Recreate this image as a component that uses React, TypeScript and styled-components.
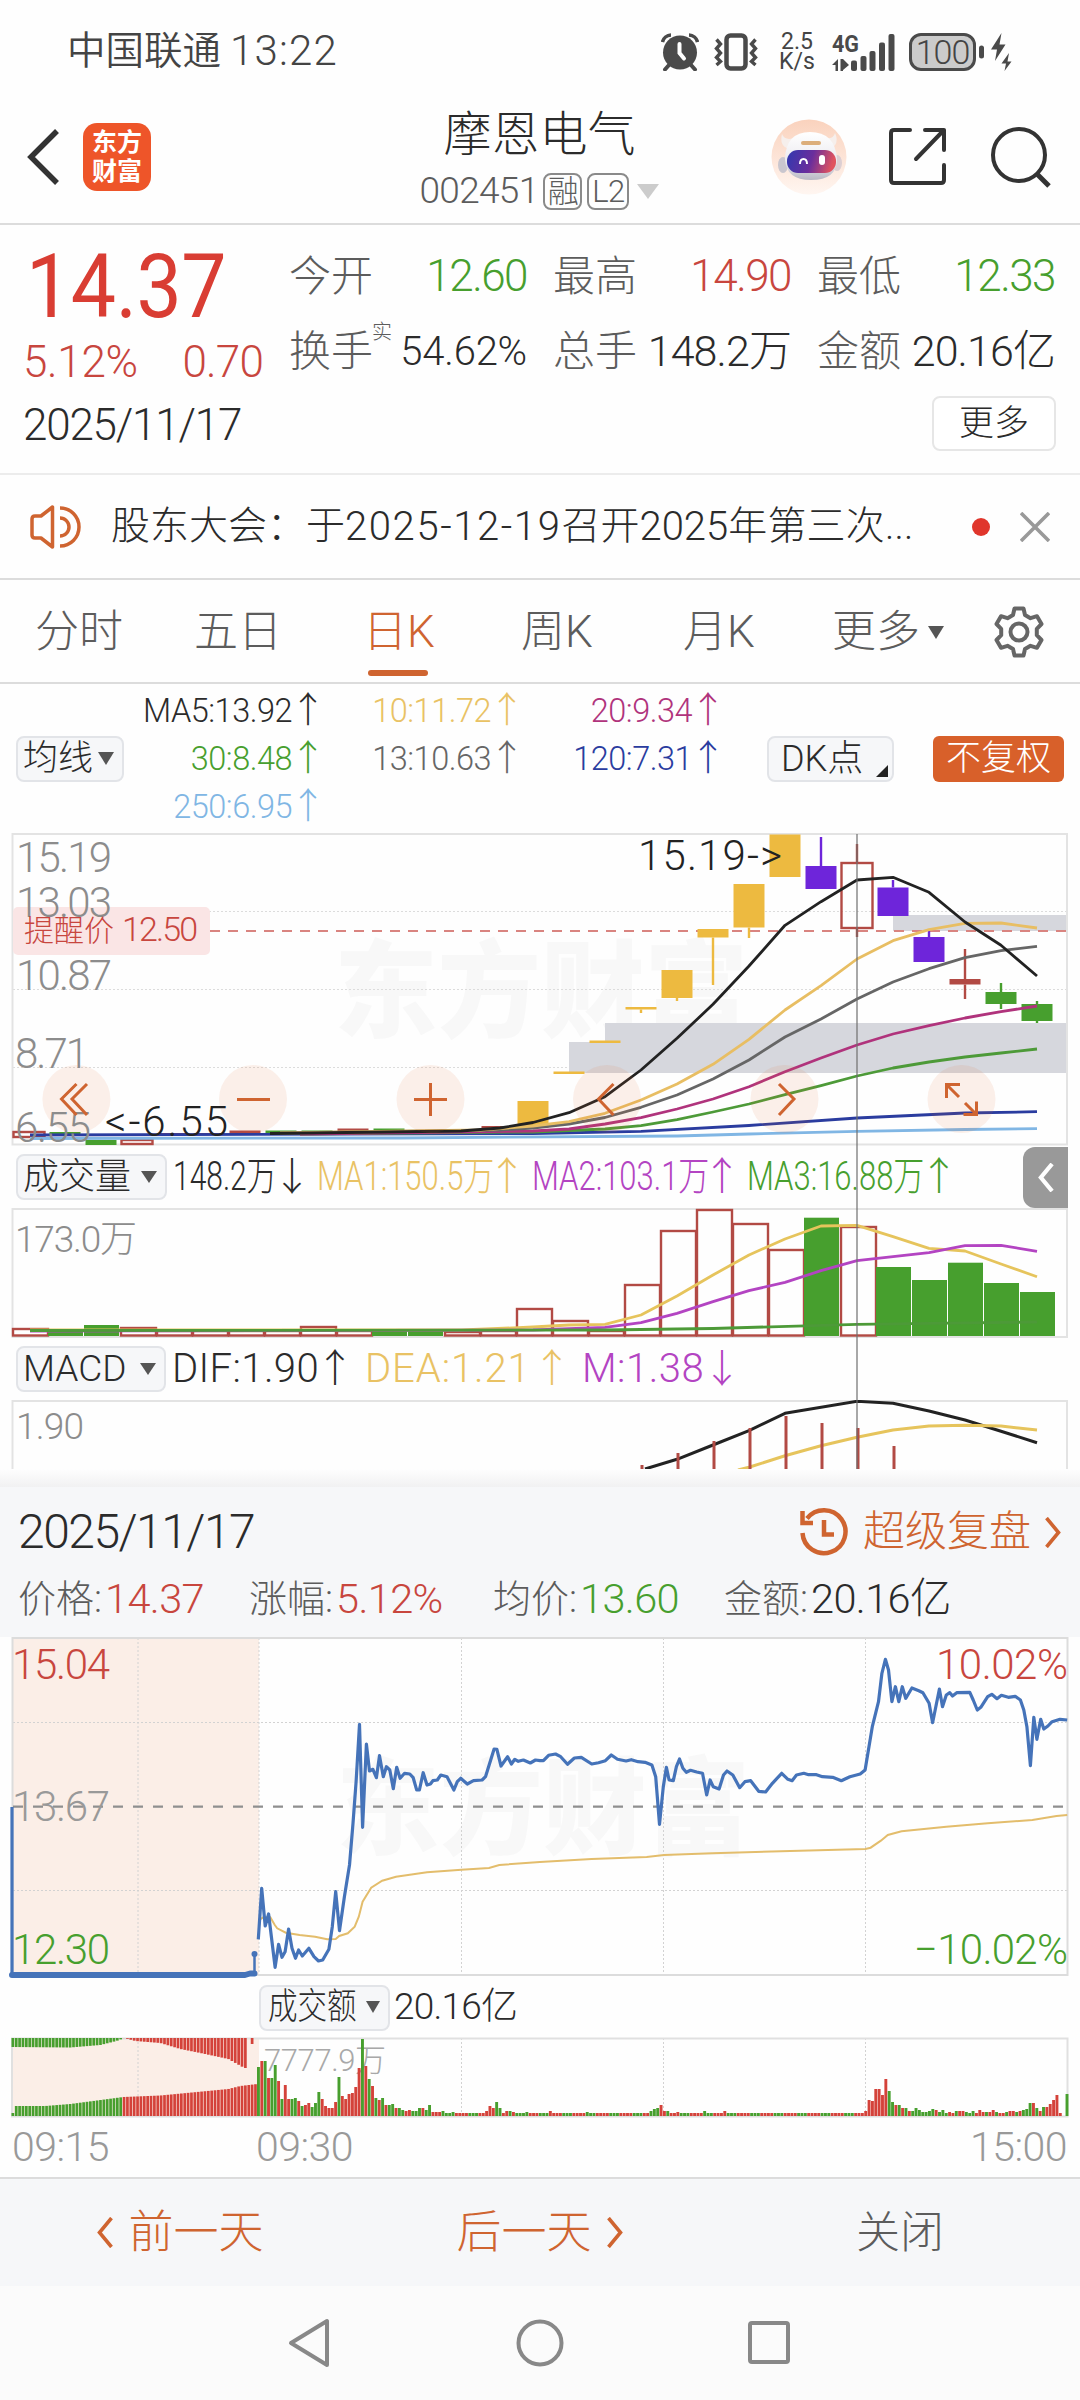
import React from "react";
import styled, { createGlobalStyle } from "styled-components";

const C = {
  ink: "#2b2b2b",
  mid: "#5c5c5c",
  soft: "#8c8c8c",
  red: "#c8463e",
  strongRed: "#d93d33",
  green: "#479f2e",
  orange: "#cf6430",
  gold: "#e9c264",
  magenta: "#b0337c",
  navy: "#2a3c9f",
  sky: "#80b6e4",
  violet: "#b344c2",
  line: "#dcdcdc",
  panel: "#f6f7f9",
};

const Global = createGlobalStyle`
  * { box-sizing: border-box; }
  body { margin: 0; background: #fdfdfd; }
`;

const Screen = styled.main`
  width: 1080px;
  height: 2400px;
  overflow: hidden;
  display: flex;
  flex-direction: column;
  background: #fefefe;
  color: ${C.ink};
  font-family: Roboto, "Noto Sans CJK SC", sans-serif;
  font-weight: 300;
  line-height: 1;
  white-space: nowrap;
  > * { flex-shrink: 0; }
`;

const Txt = styled.span<{ $size: number; $color?: string; $ls?: number; $weight?: number }>`
  font-size: ${(p) => p.$size}px;
  color: ${(p) => p.$color ?? "inherit"};
  letter-spacing: ${(p) => p.$ls ?? 0}px;
  font-weight: ${(p) => p.$weight ?? 300};
  line-height: 1.2;
`;

/* ---------- status bar ---------- */

const StatusBar = styled.header`
  height: 100px;
  padding: 3px 66px 0 67px;
  display: flex;
  align-items: center;
  justify-content: space-between;
  color: #444;
`;
const Carrier = styled.div`
  display: flex;
  align-items: center;
  gap: 9px;
`;
const StatusIcons = styled.div`
  display: flex;
  align-items: center;
`;
const Speed = styled.div`
  width: 40px;
  margin: 0 15px 0 19px;
  display: flex;
  flex-direction: column;
  align-items: center;
  font-size: 23px;
  font-weight: 400;
  line-height: 20px;
`;
const Battery = styled.div`
  width: 67px;
  height: 38px;
  margin-left: 14px;
  border: 3px solid #4a4a4a;
  border-radius: 12px;
  background: #cbcbcb;
  display: flex;
  align-items: center;
  justify-content: center;
  font-size: 34px;
  letter-spacing: -1px;
`;

/* ---------- title bar ---------- */

const TitleBar = styled.header`
  height: 125px;
  padding: 0 28px 0 24px;
  display: grid;
  grid-template-columns: 330px 1fr 330px;
  border-bottom: 2px solid ${C.line};
`;
const TitleLeft = styled.div`
  display: flex;
  align-items: center;
  gap: 22px;
  padding-bottom: 9px;
`;
const AppLogo = styled.div`
  width: 68px;
  height: 68px;
  border-radius: 14px;
  background: #ee5529;
  color: #fff;
  display: flex;
  flex-direction: column;
  align-items: center;
  justify-content: center;
  font-size: 25px;
  font-weight: 700;
  line-height: 29px;
`;
const TitleMid = styled.div`
  display: flex;
  flex-direction: column;
  align-items: center;
  padding-left: 3px;
`;
const StockName = styled.h1`
  margin: 6px 0 0 0;
  font-size: 48px;
  font-weight: 300;
  line-height: 58px;
`;
const CodeRow = styled.div`
  display: flex;
  align-items: center;
  gap: 5px;
  margin-top: 7px;
  height: 40px;
`;
const Tag = styled.span<{ $w: number }>`
  width: ${(p) => p.$w}px;
  height: 37px;
  border: 2px solid #8a8a8a;
  border-radius: 8px;
  display: flex;
  align-items: center;
  justify-content: center;
  font-size: 31px;
  letter-spacing: -0.5px;
  color: ${C.mid};
`;
const TitleRight = styled.div`
  display: flex;
  align-items: center;
  justify-content: flex-end;
  padding-bottom: 9px;
`;
const Caret = styled.i<{ $w: number; $h: number; $c: string }>`
  flex: none;
  border-left: ${(p) => p.$w / 2}px solid transparent;
  border-right: ${(p) => p.$w / 2}px solid transparent;
  border-top: ${(p) => p.$h}px solid ${(p) => p.$c};
`;
const CodeCaret = styled(Caret)`
  margin-left: 3px;
`;

/* ---------- quote ---------- */

const Quote = styled.section`
  height: 250px;
  display: flex;
  border-bottom: 2px solid #ececec;
`;
const PriceCol = styled.div`
  width: 289px;
  padding: 23px 0 0 23px;
`;
const PriceLine = styled.div<{ $h: number }>`
  height: ${(p) => p.$h}px;
  width: 240px;
  display: flex;
  align-items: center;
  justify-content: space-between;
`;
const BigPrice = styled.span`
  margin-left: 3px;
  font-size: 89px;
  font-weight: 400;
  letter-spacing: -0.5px;
  color: ${C.strongRed};
  transform: scaleX(0.905);
  transform-origin: left center;
`;
const StatCol = styled.div`
  flex: 1;
  display: flex;
  flex-direction: column;
  padding: 14px 24px 0 0;
`;
const StatGrid = styled.div`
  display: grid;
  grid-template-columns: repeat(3, 238px);
  column-gap: 26px;
  grid-auto-rows: 75px;
`;
const Stat = styled.div`
  display: flex;
  align-items: center;
  justify-content: space-between;
`;
const Sup = styled.sup`
  font-size: 20px;
  line-height: 1;
  color: ${C.mid};
  align-self: flex-start;
  margin: 8px 0 0 -1px;
`;
const StatLabel = styled.div`
  display: flex;
  align-self: stretch;
  align-items: center;
  font-size: 42px;
  color: ${C.mid};
`;
const MoreButton = styled.button`
  align-self: flex-end;
  margin-top: 7px;
  width: 124px;
  height: 55px;
  border: 2px solid #e6e6e6;
  border-radius: 8px;
  background: #fff;
  font: inherit;
  font-size: 35px;
  color: ${C.ink};
  padding: 0 0 1px;
`;

/* ---------- notice ---------- */

const Notice = styled.section`
  height: 105px;
  padding: 0 29px 0 30px;
  display: flex;
  align-items: center;
  border-bottom: 2px solid ${C.line};
`;
const NoticeText = styled.p`
  margin: 0 0 0 30px;
  width: 861px;
  display: flex;
  align-items: center;
  font-size: 39px;
  line-height: 50px;
`;
const Dot = styled.i`
  width: 18px;
  height: 18px;
  border-radius: 50%;
  background: #e0362c;
  margin-right: 30px;
`;

/* ---------- tabs ---------- */

const Tabs = styled.nav`
  height: 104px;
  display: grid;
  grid-template-columns: 160px 166px 160px 162px 150px 160px 122px;
  border-bottom: 2px solid ${C.line};
`;
const Tab = styled.div<{ $on?: boolean; $pad: number }>`
  position: relative;
  padding-left: ${(p) => p.$pad}px;
  padding-top: 2px;
  display: flex;
  align-items: center;
  gap: 8px;
  font-size: 44px;
  color: ${(p) => (p.$on ? C.orange : C.mid)};
  &::after {
    content: "";
    display: ${(p) => (p.$on ? "block" : "none")};
    position: absolute;
    left: 42px;
    bottom: 6px;
    width: 60px;
    height: 6px;
    border-radius: 3px;
    background: ${C.orange};
  }
`;

/* ---------- moving averages legend ---------- */

const MaBar = styled.section`
  height: 148px;
  padding: 2px 16px 0 16px;
  display: flex;
  align-items: center;
`;
const Chip = styled.div<{ $w: number; $size?: number }>`
  flex: none;
  width: ${(p) => p.$w}px;
  height: 46px;
  border: 2px solid #e2e4e8;
  border-radius: 8px;
  background: ${C.panel};
  display: flex;
  align-items: center;
  justify-content: space-between;
  padding: 0 8px 1px 5px;
  font-size: ${(p) => p.$size ?? 36}px;
`;
const ChipCorner = styled.i`
  align-self: flex-end;
  margin-bottom: 3px;
  border-left: 12px solid transparent;
  border-bottom: 12px solid #222;
`;
const DkChip = styled(Chip)`
  margin-left: 49px;
  padding: 0 4px 0 12px;
`;
const Adjust = styled.div`
  margin-left: 39px;
  width: 132px;
  height: 46px;
  border-radius: 6px;
  background: #d8602a;
  color: #fff;
  font-size: 35px;
  display: flex;
  align-items: center;
  justify-content: center;
  padding-bottom: 1px;
`;
const MaGrid = styled.div`
  display: grid;
  grid-template-columns: 194px 199px 201px;
  grid-auto-rows: 48px;
`;
const MaItem = styled.div<{ $color: string }>`
  display: flex;
  align-items: center;
  justify-content: flex-end;
  gap: 6px;
  color: ${(p) => p.$color};
  font-size: 32.5px;
  letter-spacing: -0.5px;
`;
const Arrow = styled.span<{ $w: number; $size: number }>`
  width: ${(p) => p.$w}px;
  font-size: ${(p) => p.$size}px;
  letter-spacing: 0;
  display: flex;
  justify-content: center;
`;

/* ---------- charts ---------- */

const ChartStack = styled.section`
  position: relative;
  height: 637px;
`;
const Plot = styled.svg`
  display: block;
  width: 1080px;
`;
const Crosshair = styled.i`
  position: absolute;
  left: 856px;
  top: 2px;
  width: 2px;
  height: 635px;
  background: rgba(110, 110, 110, 0.6);
`;
const Legend = styled.div<{ $gap: number }>`
  height: 62px;
  padding-left: 16px;
  display: flex;
  align-items: center;
  gap: ${(p) => p.$gap}px;
`;
const LegendItem = styled.div<{ $w: number; $color: string }>`
  width: ${(p) => p.$w}px;
  color: ${(p) => p.$color};
  display: flex;
  align-items: center;
  justify-content: space-between;
  font-size: 40px;
`;
const LegendChip = styled(Chip)`
  margin-right: 3px;
`;
const Squeeze = styled.span<{ $k: number; $w: number }>`
  width: ${(p) => p.$w}px;
  transform: scaleX(${(p) => p.$k});
  transform-origin: left center;
`;
const SideTab = styled.div`
  position: absolute;
  right: 12px;
  top: 315px;
  width: 45px;
  height: 61px;
  border-radius: 12px 0 0 12px;
  background: #999;
  display: flex;
  align-items: center;
  justify-content: center;
`;

/* ---------- day panel ---------- */

const PanelShade = styled.div`
  height: 18px;
  background: linear-gradient(#fefefe, #f1f1f2);
`;
const DayHead = styled.section`
  height: 150px;
  padding: 11px 18px 0 18px;
  background: ${C.panel};
`;
const DayTop = styled.div`
  height: 68px;
  display: flex;
  align-items: center;
  justify-content: space-between;
`;
const Replay = styled.div`
  display: flex;
  align-items: center;
  font-size: 42px;
  color: ${C.orange};
`;
const ReplayText = styled.span`
  margin: 0 13px 0 15px;
`;
const DayStats = styled.div`
  height: 66px;
  display: grid;
  grid-template-columns: 231px 244px 231px 1fr;
`;
const DayStat = styled.div<{ $c: string }>`
  display: flex;
  align-items: center;
  font-size: 38px;
  color: ${C.mid};
  b {
    margin-left: 3px;
    font-weight: 300;
    font-size: 41.5px;
    letter-spacing: -0.6px;
    color: ${(p) => p.$c};
  }
`;
const AmountRow = styled.div`
  height: 59px;
  padding: 0 0 0 259px;
  display: flex;
  align-items: center;
  gap: 4px;
`;
const ChipSqueeze = styled.span`
  width: 88px;
  transform: scaleX(0.82);
  transform-origin: left center;
  margin-left: 2px;
`;
const TimeAxis = styled.div`
  height: 59px;
  padding: 0 13px 1px 12px;
  display: grid;
  grid-template-columns: 244px 1fr auto;
  align-items: center;
  font-size: 41px;
  letter-spacing: -0.5px;
  color: #999;
`;
const BottomBar = styled.footer`
  height: 109px;
  border-top: 2px solid ${C.line};
  background: ${C.panel};
  display: grid;
  grid-template-columns: repeat(3, 1fr);
  color: ${C.orange};
`;
const BottomItem = styled.div<{ $muted?: boolean }>`
  display: flex;
  align-items: center;
  justify-content: center;
  gap: 14px;
  color: ${(p) => (p.$muted ? C.mid : "inherit")};
  font-size: ${(p) => (p.$muted ? 44 : 45)}px;
`;
const NavBar = styled.div`
  height: 114px;
  background: #fbfbfb;
  display: flex;
  align-items: center;
  justify-content: center;
  gap: 182px;
`;

/* ---------- data ---------- */

type Pt = [number, number];
const poly = (p: Pt[]) => p.map((q) => q.join(",")).join(" ");
/* one sample per candle, on the 36px candle pitch */
const series = (start: number, ys: number[], head: Pt[] = []): string =>
  poly([...head, ...ys.map((y, i): Pt => [start + i * 36, y])]);

const MA: [string, string][] = [
  [C.sky, poly([[30, 1138.5], [400, 1138], [677, 1136], [749, 1134], [857, 1131.3], [965, 1129.5], [1037, 1128.7]])],
  [C.navy, poly([[30, 1135], [533, 1133.5], [641, 1131.3], [749, 1125.5], [857, 1118], [965, 1113], [1037, 1111.7]])],
  ["#4d9a38", series(605, [1129, 1125.7, 1119.7, 1112, 1104, 1094.7, 1085.7, 1076, 1068, 1062, 1057, 1053, 1049], [[300, 1134], [533, 1132]])],
  [C.magenta, series(569, [1129, 1124, 1117.7, 1109, 1099, 1086.7, 1071.7, 1058, 1045, 1034, 1025.7, 1018, 1011.7, 1006], [[300, 1134], [533, 1131]])],
  ["#666", series(569, [1124, 1117.5, 1107.3, 1095, 1079, 1060, 1037, 1019, 999, 982, 968.7, 957.7, 950.7, 946.3], [[280, 1133], [500, 1130], [533, 1128]])],
  ["#e8be63", series(569, [1121.7, 1113.3, 1100, 1084, 1064.3, 1039.3, 1010, 985.7, 959, 940.7, 929.7, 923.3, 923, 928], [[280, 1133], [480, 1130], [533, 1126]])],
  ["#222", series(569, [1112.7, 1096.7, 1070, 1038.3, 1004.3, 966, 925.3, 901.7, 880, 877.3, 892.3, 922, 945.3, 976], [[270, 1133.5], [461, 1131], [500, 1128], [533, 1122.5]])],
];

type Candle = { x: number; t: number; b: number; hi?: number; lo?: number; c: string; hollow?: boolean };
const GOLD = "#edba40";
const PURPLE = "#6e25da";
const RED = "#b24a44";
const candles: Candle[] = [
  { x: 29, t: 1132, b: 1137, c: RED, hollow: true },
  { x: 65, t: 1132, b: 1134, c: C.green },
  { x: 101, t: 1140, b: 1145, c: C.green },
  { x: 137, t: 1140, b: 1144, c: RED, hollow: true },
  { x: 173, t: 1133, b: 1136, c: RED },
  { x: 209, t: 1133, b: 1135, c: RED },
  { x: 245, t: 1130.5, b: 1134, c: RED },
  { x: 281, t: 1130.5, b: 1133, c: C.green },
  { x: 317, t: 1130.5, b: 1133, c: C.green },
  { x: 353, t: 1128.5, b: 1131, c: RED },
  { x: 389, t: 1128.5, b: 1130, c: C.green },
  { x: 425, t: 1130, b: 1131, c: C.green },
  { x: 497, t: 1126, b: 1129, c: RED },
  { x: 533, t: 1101, b: 1128, c: GOLD },
  { x: 569, t: 1071.5, b: 1074, c: GOLD },
  { x: 605, t: 1040.5, b: 1043, c: GOLD },
  { x: 641, t: 1007, b: 1009.5, lo: 1013, c: GOLD },
  { x: 677, t: 970, b: 998, lo: 1001, c: GOLD },
  { x: 713, t: 929, b: 937.5, lo: 985, c: GOLD },
  { x: 749, t: 884, b: 927.5, lo: 938, c: GOLD },
  { x: 785, t: 834.5, b: 877, c: GOLD },
  { x: 821, t: 866, b: 889, hi: 837, c: PURPLE },
  { x: 857, t: 863, b: 928, hi: 844, lo: 937, c: RED, hollow: true },
  { x: 893, t: 887.5, b: 916, hi: 880, c: PURPLE },
  { x: 929, t: 937, b: 962, hi: 931, c: PURPLE },
  { x: 965, t: 979, b: 984.5, hi: 949, lo: 999, c: RED },
  { x: 1001, t: 992, b: 1004, hi: 983, lo: 1009, c: C.green },
  { x: 1037, t: 1004, b: 1021, hi: 1001, lo: 1023, c: C.green },
];

/* volume bars: [top, filled] from the first candle on */
const volumes: [number, boolean][] = [
  [1329, false], [1331, true], [1325, true], [1328, false], [1331, false], [1331, false], [1331, false], [1331, false],
  [1327, false], [1331, false], [1331, true], [1331, true], [1332, false], [1331, false], [1309, false], [1321, false],
  [1331, false], [1285, false], [1231, false], [1210, false], [1224, false], [1250, false], [1217.7, true],
  [1227, false], [1267, true], [1280, true], [1262.7, true], [1283, true], [1292, true],
];

const macdBars: Pt[] = [[642, 1465], [678, 1453], [714, 1441], [750, 1428], [786, 1416], [822, 1423], [858, 1428], [894, 1446]];

/* intraday samples, in thirds of a pixel below y = 1630 */
const SX = 2.904;
const scale = (x0: number, p: Pt[]) => p.map(([x, y]): Pt => [+(x0 + x / SX).toFixed(1), +(1630 + y / 3).toFixed(1)]);
const price = poly([
  ...scale(0, [[750, 928], [760, 775], [770, 888], [780, 852], [799, 1012], [809, 943], [819, 982], [828, 965], [838, 897], [848, 955], [858, 985], [867, 960], [878, 978], [897, 955], [912, 980], [925, 993], [937, 990], [955, 958], [965, 890], [975, 785], [986, 902], [1000, 800], [1015, 705], [1025, 580], [1034, 455], [1044, 283], [1053, 592], [1064, 342], [1073, 423], [1083, 418], [1093, 443], [1102, 377], [1113, 440], [1122, 410], [1132, 420], [1142, 476], [1152, 412], [1162, 445], [1175, 430], [1190, 432], [1200, 443], [1210, 480], [1218, 480], [1229, 428], [1240, 465], [1250, 462], [1257, 452], [1270, 450], [1280, 435], [1298, 440], [1308, 460], [1318, 480], [1328, 455], [1338, 445], [1357, 462], [1375, 452], [1400, 450], [1410, 440], [1428, 380], [1435, 357], [1443, 358], [1455, 408], [1474, 380], [1485, 402], [1495, 388], [1505, 394], [1520, 390], [1540, 399], [1555, 390]]),
  ...scale(540, [[0, 392], [10, 392], [25, 376], [45, 372], [60, 380], [80, 403], [100, 384], [120, 382], [150, 402], [170, 398], [190, 392], [207, 375], [225, 388], [250, 393], [265, 389], [285, 395], [305, 397], [325, 405], [336, 440], [347, 583], [358, 470], [367, 412], [375, 450], [387, 452], [396, 410], [405, 387], [415, 415], [425, 427], [437, 421], [455, 426], [472, 430], [484, 495], [494, 450], [503, 470], [520, 477], [533, 435], [543, 423], [560, 435], [580, 473], [595, 455], [612, 452], [635, 484], [655, 486], [675, 460], [702, 430], [720, 448], [732, 452], [745, 435], [766, 430], [780, 434], [803, 434], [820, 440], [850, 442], [875, 452], [900, 440], [930, 432], [944, 420], [965, 290], [983, 215], [993, 130], [1003, 88], [1012, 120], [1022, 215], [1032, 170], [1042, 215], [1052, 170], [1062, 205], [1080, 174], [1100, 182], [1112, 188], [1130, 220], [1140, 278], [1160, 177], [1169, 230], [1180, 195], [1190, 188], [1198, 198], [1210, 188], [1248, 187], [1258, 210], [1270, 240], [1280, 232], [1300, 200], [1312, 193], [1327, 206], [1340, 196], [1360, 202], [1380, 199], [1395, 210], [1405, 240], [1414, 290], [1424, 407], [1434, 262], [1443, 328], [1454, 268], [1463, 297], [1475, 288], [1487, 275], [1510, 268], [1531, 270]]),
]);
const average = poly([
  ...scale(0, [[752, 870], [765, 862], [785, 862], [798, 885], [805, 895], [830, 908], [870, 915], [915, 920], [950, 928], [975, 927], [985, 918], [1010, 910], [1030, 890], [1042, 860], [1053, 815], [1078, 773], [1110, 752], [1150, 740], [1240, 727], [1340, 719], [1420, 714], [1450, 705], [1568, 696]]),
  ...scale(540, [[150, 687], [310, 681], [360, 675], [500, 670], [700, 664], [945, 657], [960, 653], [990, 632], [1010, 615], [1050, 604], [1180, 590], [1300, 580], [1430, 570], [1500, 558], [1531, 555]]),
]);

/* minute turnover: height in px followed by g (down) or r (up) */
const openBars =
  "49g 55r 55g 38r 38g 51g 35r 17g 31r 17r 17g 18g 15r 10g 11r 13r 9g 13g 24g 17r 10r 8r 8r 14r 39g 20r 17r 22r 23r 29r 48r 77g 50r 37g 30r 18g 16r 18g 11r 11g 12g 8r 8g 6g 5r 6r 5g 5g 8g 8r 6g 11g 4r 4r 4r 5g 3g 3g 4g 3r";
const spikes: Record<number, string> = {
  68: "5r", 69: "10r", 70: "8r", 71: "14g", 72: "8g", 74: "5r", 75: "5g", 76: "4r", 80: "4g", 87: "5r", 98: "4g",
  117: "5g", 118: "7g", 119: "8g", 120: "11r", 121: "5r", 122: "5g", 125: "4r", 133: "5g", 139: "5r",
  181: "5r", 182: "16r", 183: "15r", 184: "27r", 185: "27r", 186: "21r", 187: "37r", 188: "25g", 189: "14g", 190: "11r",
  191: "11g", 192: "8r", 193: "8g", 194: "5r", 195: "5g", 196: "8g", 197: "6g", 198: "4g", 199: "4g", 200: "5g",
  201: "7g", 202: "6r", 203: "4g", 204: "6g", 206: "4r", 208: "5g", 209: "5r", 210: "5r", 211: "4g", 213: "5g",
  215: "6r", 216: "4r", 217: "4g", 218: "4r", 219: "6r", 220: "4g", 223: "4g", 224: "5r", 225: "5r", 226: "4g",
  227: "5r", 228: "6g", 229: "7g", 230: "13g", 231: "13r", 232: "8g", 233: "5r", 234: "9g", 235: "9r", 236: "12r",
  237: "16r", 238: "21r", 239: "3r", 240: "0g", 241: "22g",
};
const opening = openBars.split(" ");
const turnover = Array.from({ length: 242 }, (_, i) => opening[i] ?? spikes[i] ?? (i % 7 < 3 ? "3g" : "3r"));

/* call auction: matched amount from below, unmatched amount from above */
const lerp = (stops: Pt[], x: number) => {
  for (let i = 1; i < stops.length; i++) {
    const [x0, y0] = stops[i - 1];
    const [x1, y1] = stops[i];
    if (x <= x1) return y0 + ((y1 - y0) * (x - x0)) / (x1 - x0);
  }
  return stops[stops.length - 1][1];
};
const matched: Pt[] = [[12, 10], [45, 10], [70, 12], [123, 19], [160, 20.5], [228, 27], [240, 30], [257, 32]];
const unmatched: Pt[] = [[12, 9], [70, 9.5], [100, 7], [116, 3], [124, 0], [135, 3], [160, 5], [180, 11], [200, 15], [228, 21], [244, 30]];
const auction = Array.from({ length: 73 }, (_, i) => 12.5 + i * 3.37);

const Watermark = ({ x, y }: { x: number; y: number }) => (
  <text x={x} y={y} fill="#f8f8f8" fontSize={106} fontWeight={900} textLength={414} lengthAdjust="spacingAndGlyphs">
    东方财富
  </text>
);

type LabelProps = { x: number; y: number; w: number; s: number; c: string; children: string };
const Label = ({ x, y, w, s, c, children }: LabelProps) => (
  <text x={x} y={y} fontSize={s} fill={c} textLength={w}>
    {children}
  </text>
);

const roundButtons = [76.4, 253, 430.5, 607, 784.5, 961.5];

function CandleChart() {
  return (
    <Plot height="314" viewBox="0 832 1080 314">
      <Watermark x={334} y={1029} />
      <g stroke="#dcdcdc" strokeDasharray="2 2">
        <path d="M13 911.5H1067M13 989.5H1067M13 1067.5H1067" />
      </g>
      <g fill="#d6d7dd">
        <rect x="605" y="1023" width="462" height="50" />
        <rect x="569" y="1042" width="36" height="31" />
        <rect x="893" y="915" width="174" height="16" />
      </g>
      <g fill="none" stroke="#e3e3e3" strokeWidth="2">
        <rect x="12.5" y="834" width="1054.5" height="310.5" />
      </g>
      <rect x="13" y="907" width="197" height="48" rx="5" fill="#fae5e5" />
      <path d="M210 931H1067" stroke="#d98480" strokeWidth="2" strokeDasharray="10 8" />
      {candles.map((k) => (
        <g key={k.x} stroke={k.c}>
          {k.hi && <path d={`M${k.x} ${k.hi}V${k.t}`} strokeWidth="2.4" />}
          {k.lo && <path d={`M${k.x} ${k.b}V${k.lo}`} strokeWidth="2.4" />}
          <rect
            x={k.x - 15.5}
            y={k.t}
            width={31}
            height={k.b - k.t}
            fill={k.hollow ? "none" : k.c}
            strokeWidth={k.hollow ? 2.4 : 0}
          />
        </g>
      ))}
      <g fill="none" strokeWidth="2.8" strokeLinejoin="round">
        {MA.map(([c, p]) => (
          <polyline key={c} points={p} stroke={c} />
        ))}
      </g>
      <g fill="rgba(226,110,50,0.1)">
        {roundButtons.map((x) => (
          <circle key={x} cx={x} cy="1099" r="34" />
        ))}
      </g>
      <Label x={16} y={871.7} w={96} s={42} c={C.soft}>15.19</Label>
      <Label x={16} y={917} w={96} s={42} c={C.soft}>13.03</Label>
      <Label x={16} y={989.7} w={96} s={42} c={C.soft}>10.87</Label>
      <Label x={15} y={1067.5} w={74} s={42} c={C.soft}>8.71</Label>
      <Label x={15} y={1141.7} w={76} s={42} c={C.soft}>6.55</Label>
      <Label x={24} y={941} w={90} s={30} c={C.red}>提醒价</Label>
      <Label x={122} y={941} w={76} s={34} c={C.red}>12.50</Label>
      <Label x={105} y={1136} w={123} s={42} c="#222">{"<-6.55"}</Label>
      <Label x={638} y={870} w={144} s={42} c="#222">{"15.19->"}</Label>
      <g fill="none" stroke={C.orange} strokeWidth="3">
        <path d="M76.5 1084L61.5 1099L76.5 1115M87 1084L72 1099L87 1115" />
        <path d="M237 1099.500H270M414 1099.500H447M430.500 1083V1116" />
        <path d="M613.500 1084L598.500 1099L613.500 1115M779 1084L794 1099L779 1115" />
        <path d="M946.500 1098V1084.500H960M947 1085L959 1097M976.500 1101.500V1114.500H963.500M976 1114L965 1103" />
      </g>
    </Plot>
  );
}

function VolumeChart() {
  return (
    <Plot height="130" viewBox="0 1208 1080 130">
      <rect x="12.5" y="1209" width="1054.5" height="128" fill="none" stroke="#e3e3e3" strokeWidth="2" />
      {volumes.map(([t, solid], i) =>
        solid ? (
          <rect key={i} x={12 + i * 36} y={t} width="35" height={1336 - t} fill={C.green} />
        ) : (
          <rect key={i} x={13 + i * 36} y={t} width="35" height={1335.5 - t} fill="none" stroke={RED} strokeWidth="2.4" />
        ),
      )}
      <g fill="none" strokeWidth="2.8" strokeLinejoin="round">
        <polyline points="30,1330 461,1330 533,1327 569,1325 605,1324.300 641,1315 677,1296 713,1275 749,1255 785,1239 821,1226 857,1225.300 893,1236.700 929,1248.300 965,1251 1001,1264 1037,1276.700" stroke="#e6c45c" />
        <polyline points="30,1331 533,1330 605,1327.300 641,1322.700 677,1313.300 713,1301.700 749,1290.700 785,1282.300 821,1270.700 857,1260.700 893,1256.700 929,1252.700 965,1245.700 1001,1245.300 1037,1251.300" stroke={C.violet} />
        <polyline points="30,1330.500 605,1330 713,1328.500 857,1324.300 929,1323.300 1037,1322" stroke="#4d9a38" />
      </g>
      <Label x={15} y={1251.7} w={122} s={37} c={C.soft}>173.0万</Label>
    </Plot>
  );
}

function MacdChart() {
  return (
    <Plot height="69" viewBox="0 1400 1080 69">
      <path d="M12.500 1469V1401H1067V1469" fill="none" stroke="#e3e3e3" strokeWidth="2" />
      <g fill="none" strokeWidth="3" strokeLinejoin="round">
        <polyline points="645,1469 677,1459.300 713,1445 749,1430.700 785,1413.300 857,1401.300 893,1403.300 929,1411 965,1420 1001,1431.300 1037,1442.700" stroke="#222" />
        <polyline points="738,1470 749,1467.300 785,1455.700 821,1445.700 857,1437.300 893,1430 929,1426 965,1425.300 1001,1426 1037,1430" stroke="#e6c45c" />
      </g>
      {macdBars.map(([x, y]) => (
        <rect key={x} x={x - 1.5} y={y} width="3" height={1470 - y} fill={RED} />
      ))}
      <Label x={16} y={1439.300} w={68} s={37} c={C.soft}>1.90</Label>
    </Plot>
  );
}

function IntradayChart() {
  return (
    <Plot height="341" viewBox="0 1637 1080 341">
      <rect x="13" y="1638" width="246" height="337" fill="#fbeee7" />
      <Watermark x={336} y={1846} />
      <g stroke="#d2d2d2" strokeDasharray="2 2" fill="none">
        <path d="M13 1722.500H1067M13 1890.500H1067M138 1638V1974M259 1638V1974M461.500 1638V1974M663.500 1638V1974M865.500 1638V1974" />
      </g>
      <rect x="12.5" y="1638" width="1055" height="337" fill="none" stroke="#dcdcdc" strokeWidth="2" />
      <path d="M13 1806.700H1063" stroke="#8f8f8f" strokeWidth="2.200" strokeDasharray="10 10" />
      <Label x={12} y={1679} w={98} s={42} c={C.red}>15.04</Label>
      <Label x={12} y={1820.7} w={98} s={42} c="#999">13.67</Label>
      <Label x={12} y={1963.7} w={98} s={42} c={C.green}>12.30</Label>
      <Label x={936} y={1679} w={132} s={42} c={C.red}>10.02%</Label>
      <Label x={914} y={1963.7} w={154} s={42} c={C.green}>−10.02%</Label>
      <polyline points={average} fill="none" stroke="#e3bd6c" strokeWidth="2" />
      <g fill="none" stroke="#4573b9" strokeLinejoin="round">
        <polyline points={price} strokeWidth="3.200" />
        <path d="M12 1807V1975" strokeWidth="3.200" />
        <path d="M12 1975H245L250 1973.500H254.500" strokeWidth="6" strokeLinecap="round" />
        <path d="M254.500 1973V1954" strokeWidth="2.500" />
      </g>
      <circle cx="254.500" cy="1954" r="3" fill="#4573b9" />
    </Plot>
  );
}

function TurnoverChart() {
  return (
    <Plot height="81" viewBox="0 2037 1080 81">
      <rect x="12" y="2038" width="247" height="78" fill="#fbeee7" />
      <g stroke="#d2d2d2" strokeDasharray="2 2">
        <path d="M138 2038V2116M461.500 2038V2116M663.500 2038V2116M865.500 2038V2116" />
      </g>
      <rect x="12" y="2038.500" width="1055.500" height="78" fill="none" stroke="#e0e0e0" strokeWidth="2" />
      <Label x={264} y={2070.700} w={122} s={31} c="#a8a8a8">7777.9万</Label>
      {auction.map((x, i) => {
        const tail = i === 71;
        const h = i ? lerp(matched, x) : 3;
        const d = x < 246 ? lerp(unmatched, x) : tail ? 6 : 0;
        const fill = x > 122 ? "#d4423a" : C.green;
        return (
          <g key={i} fill={fill}>
            <rect x={x - 1} y={2116 - h} width="2.700" height={h} />
            <rect x={x - 1} y="2038" width="2.700" height={d} />
          </g>
        );
      })}
      {turnover.map((v, i) => {
        const h = parseInt(v, 10);
        return (
          <rect key={i} x={257 + i * 3.355} y={2116 - h} width="2.900" height={h} fill={v.endsWith("g") ? C.green : "#d4423a"} />
        );
      })}
    </Plot>
  );
}

/* ---------- icons ---------- */

const AlarmIcon = () => (
  <svg width="38" height="38" viewBox="0 0 38 38">
    <circle cx="19" cy="19.500" r="17" fill="#4a4a4a" />
    <path d="M1.500 9A9 9 0 0 1 10 2M36.500 9A9 9 0 0 0 28 2" stroke="#4a4a4a" strokeWidth="3.500" fill="none" />
    <path d="M8 32L4 36.500M30 32L34 36.500" stroke="#4a4a4a" strokeWidth="4" strokeLinecap="round" />
    <path d="M18.500 11V20L23 25.500" stroke="#fff" strokeWidth="4" strokeLinecap="round" fill="none" />
  </svg>
);
const VibrateSvg = styled.svg`
  margin-left: 15px;
`;
const VibrateIcon = () => (
  <VibrateSvg width="44" height="38" viewBox="0 0 44 38">
    <rect x="12.500" y="2.500" width="19" height="33" rx="4" fill="none" stroke="#4a4a4a" strokeWidth="4.500" />
    <path d="M2.500 6.500L6.500 11L2.500 15.500L6.500 20L2.500 24.500L6.500 28.500L2.500 32M41.500 6.500L37.500 11L41.500 15.500L37.500 20L41.500 24.500L37.500 28.500L41.500 32" fill="none" stroke="#4a4a4a" strokeWidth="3.400" />
  </VibrateSvg>
);
const SignalIcon = () => (
  <svg width="63" height="38" viewBox="0 0 63 38" fill="#4a4a4a">
    <text x="0" y="18.500" fontSize="24" fontWeight="700" textLength="27" lengthAdjust="spacingAndGlyphs">4G</text>
    <path d="M0 32L6 26V38H3.500V32ZM8.500 26H11V26L17 32L11 37V38H8.500Z" />
    <rect x="19" y="27.500" width="6" height="10.500" rx="2" />
    <rect x="28.500" y="23" width="6" height="15" rx="2" />
    <rect x="37.500" y="18" width="6" height="20" rx="2" />
    <rect x="47" y="9.500" width="6" height="28.500" rx="2" />
    <rect x="56.500" y="1" width="6" height="37" rx="2" />
  </svg>
);
const ChargeIcon = () => (
  <svg width="38" height="40" viewBox="0 0 38 40" fill="#4a4a4a">
    <rect x="3" y="13.500" width="5" height="13" rx="2.500" />
    <path d="M25.500 1L15 17.500H21L19 29L29.500 12.500H23.500ZM33 21L25.500 31.500H30L28.500 39L35.500 29.500H31.500Z" />
  </svg>
);
const BackIcon = () => (
  <svg width="37" height="58" viewBox="0 0 37 58" fill="none" stroke="#333" strokeWidth="5.500">
    <path d="M33 3L7 29L33 55" />
  </svg>
);
const RobotIcon = () => (
  <svg width="76" height="76" viewBox="0 0 76 76">
    <defs>
      <linearGradient id="halo" x1="0" y1="0" x2="0" y2="1">
        <stop offset="0" stopColor="#fad2bd" />
        <stop offset="1" stopColor="#fff6f1" />
      </linearGradient>
      <linearGradient id="visor" x1="0" y1="0" x2="1" y2="0.150">
        <stop offset="0" stopColor="#3139b0" />
        <stop offset="0.550" stopColor="#6a2e9c" />
        <stop offset="1" stopColor="#e0535f" />
      </linearGradient>
      <linearGradient id="helmet" x1="0" y1="0" x2="0" y2="1">
        <stop offset="0" stopColor="#ffffff" />
        <stop offset="0.600" stopColor="#ecebf0" />
        <stop offset="1" stopColor="#b9b9c4" />
      </linearGradient>
    </defs>
    <circle cx="38" cy="38" r="37.500" fill="url(#halo)" />
    <path d="M11 15Q8 27 18 30L26 18Q14 23 11 15ZM64 14Q69 25 59 30L50 18Q62 22 64 14Z" fill="#f6efec" />
    <ellipse cx="12" cy="46" rx="5" ry="8" fill="#c9c6ce" />
    <ellipse cx="66" cy="44" rx="5" ry="8" fill="#dccfd3" />
    <path d="M14 40Q15 13 39 13Q64 13 66 40Q66 61 40 61Q15 61 14 40Z" fill="url(#helmet)" />
    <rect x="30" y="22" width="20" height="4" rx="2" fill="#dcae7b" />
    <rect x="16" y="31" width="49" height="23" rx="11" fill="url(#visor)" />
    <path d="M29 45Q29 40 32.500 40Q36 40 36 45" fill="none" stroke="#fff" strokeWidth="2" />
    <rect x="48" y="36" width="6" height="10" rx="3" fill="#fff" />
  </svg>
);
const ShareSvg = styled.svg`
  margin-left: 41px;
`;
const ShareIcon = () => (
  <ShareSvg width="60" height="60" viewBox="0 0 60 60" fill="none" stroke="#333" strokeWidth="4" strokeLinecap="round" strokeLinejoin="round">
    <path d="M22 3H6Q3 3 3 6V53Q3 56 6 56H53Q56 56 56 53V38M37 3H56V23M56 3L28 32" />
  </ShareSvg>
);
const SearchSvg = styled.svg`
  margin-left: 42px;
`;
const SearchIcon = () => (
  <SearchSvg width="62" height="62" viewBox="0 0 62 62" fill="none" stroke="#333" strokeWidth="4">
    <circle cx="29" cy="29" r="26" />
    <path d="M47 48L59 60" strokeWidth="5" />
  </SearchSvg>
);
const SpeakerIcon = () => (
  <svg width="51" height="44" viewBox="0 0 51 44" fill="none" stroke={C.orange} strokeWidth="3.500" strokeLinejoin="round">
    <path d="M22.500 2V42L11 33H5Q2 33 2 30V14Q2 11 5 11H11Z" />
    <path d="M30 13A9 9 0 0 1 30 31M30 3A19 19 0 0 1 30 41" />
  </svg>
);
const CloseIcon = () => (
  <svg width="30" height="30" viewBox="0 0 30 30" stroke="#999" strokeWidth="3.600">
    <path d="M1 1L29 29M29 1L1 29" />
  </svg>
);
const GearIcon = () => (
  <svg width="52" height="52" viewBox="0 0 52 52" fill="none" stroke="#666" strokeWidth="4" strokeLinejoin="round">
    <path d="M21.500 2.500H30.500L32 9L37.500 12.200L44 10.200L48.500 18L43.800 22.800V29.200L48.500 34L44 41.800L37.500 39.800L32 43L30.500 49.500H21.500L20 43L14.500 39.800L8 41.800L3.500 34L8.200 29.200V22.800L3.500 18L8 10.200L14.500 12.200L20 9Z" />
    <circle cx="26" cy="26" r="8.500" />
  </svg>
);
const HistoryIcon = () => (
  <svg width="50" height="50" viewBox="0 0 50 50" fill="none" stroke={C.orange} strokeWidth="4.500">
    <path d="M4.500 26A21.500 21.500 0 1 0 9 11.500" />
    <path d="M4.500 4V16H15" />
    <path d="M26 13V27.500H36" />
  </svg>
);
type ChevronProps = { left?: boolean; w?: number; h?: number; c?: string; sw?: number };
const Chevron = ({ left, w = 18, h = 31, c = C.orange, sw = 3.6 }: ChevronProps) => (
  <svg width={w} height={h} viewBox="0 0 17 31" fill="none" stroke={c} strokeWidth={sw}>
    <path d={left ? "M15 1L3 15.500L15 30" : "M2 1L14 15.500L2 30"} />
  </svg>
);

/* ---------- page ---------- */

const maItems: [string, string][] = [
  ["MA5:13.92", C.ink], ["10:11.72", C.gold], ["20:9.34", C.magenta],
  ["30:8.48", C.green], ["13:10.63", "#666"], ["120:7.31", C.navy],
  ["250:6.95", C.sky],
];

export default function App() {
  return (
    <Screen>
      <Global />
      <StatusBar>
        <Carrier>
          <Txt $size={38.5} $weight={350}>中国联通</Txt>
          <Txt $size={42} $weight={350} $ls={1.2}>13:22</Txt>
        </Carrier>
        <StatusIcons>
          <AlarmIcon />
          <VibrateIcon />
          <Speed>
            <span>2.5</span>
            <span>K/s</span>
          </Speed>
          <SignalIcon />
          <Battery>100</Battery>
          <ChargeIcon />
        </StatusIcons>
      </StatusBar>

      <TitleBar>
        <TitleLeft>
          <BackIcon />
          <AppLogo>
            <span>东方</span>
            <span>财富</span>
          </AppLogo>
        </TitleLeft>
        <TitleMid>
          <StockName>摩恩电气</StockName>
          <CodeRow>
            <Txt $size={37} $color={C.mid} $ls={-0.7}>002451</Txt>
            <Tag $w={39}>融</Tag>
            <Tag $w={42}>L2</Tag>
            <CodeCaret $w={22} $h={15} $c="#ccc" />
          </CodeRow>
        </TitleMid>
        <TitleRight>
          <RobotIcon />
          <ShareIcon />
          <SearchIcon />
        </TitleRight>
      </TitleBar>

      <Quote>
        <PriceCol>
          <PriceLine $h={76}>
            <BigPrice>14.37</BigPrice>
          </PriceLine>
          <PriceLine $h={76}>
            <Txt $size={44} $color={C.red} $ls={-0.3}>5.12%</Txt>
            <Txt $size={44} $color={C.red} $ls={-0.8}>0.70</Txt>
          </PriceLine>
          <PriceLine $h={50}>
            <Txt $size={44} $ls={-1.2}>2025/11/17</Txt>
          </PriceLine>
        </PriceCol>
        <StatCol>
          <StatGrid>
            <Stat><StatLabel>今开</StatLabel><Txt $size={44} $ls={-1.5} $color={C.green}>12.60</Txt></Stat>
            <Stat><StatLabel>最高</StatLabel><Txt $size={44} $ls={-1.5} $color={C.red}>14.90</Txt></Stat>
            <Stat><StatLabel>最低</StatLabel><Txt $size={44} $ls={-1.5} $color={C.green}>12.33</Txt></Stat>
            <Stat><StatLabel>换手<Sup>实</Sup></StatLabel><Txt $size={40} $ls={-0.2}>54.62%</Txt></Stat>
            <Stat><StatLabel>总手</StatLabel><Txt $size={43} $ls={-0.9}>148.2万</Txt></Stat>
            <Stat><StatLabel>金额</StatLabel><Txt $size={43} $ls={-0.9}>20.16亿</Txt></Stat>
          </StatGrid>
          <MoreButton>更多</MoreButton>
        </StatCol>
      </Quote>

      <Notice>
        <SpeakerIcon />
        <NoticeText>
          <Txt $size={39}>股东大会：于</Txt>
          <Txt $size={40} $ls={1.6}>2025-12-19</Txt>
          <Txt $size={39}>召开</Txt>
          <Txt $size={40}>2025</Txt>
          <Txt $size={39} $ls={0.2}>年第三次...</Txt>
        </NoticeText>
        <Dot />
        <CloseIcon />
      </Notice>

      <Tabs>
        <Tab $pad={35}>分时</Tab>
        <Tab $pad={34}>五日</Tab>
        <Tab $pad={37} $on>日K</Tab>
        <Tab $pad={35}>周K</Tab>
        <Tab $pad={35}>月K</Tab>
        <Tab $pad={34}>更多<Caret $w={16} $h={13} $c="#555" /></Tab>
        <Tab $pad={35}><GearIcon /></Tab>
      </Tabs>

      <MaBar>
        <Chip $w={108} $size={35}>均线<Caret $w={16} $h={13} $c="#555" /></Chip>
        <MaGrid>
          {maItems.map(([t, c]) => (
            <MaItem key={t} $color={c}>
              {t}
              <Arrow $w={20} $size={36}>↑</Arrow>
            </MaItem>
          ))}
        </MaGrid>
        <DkChip $w={127}>DK点<ChipCorner /></DkChip>
        <Adjust>不复权</Adjust>
      </MaBar>

      <ChartStack>
        <CandleChart />
        <Legend $gap={15}>
          <LegendItem $w={286} $color={C.ink}>
            <LegendChip $w={151}>成交量<Caret $w={16} $h={12} $c="#555" /></LegendChip>
            <Squeeze $k={0.75} $w={107}>148.2万</Squeeze>
            <Arrow $w={20} $size={39}>↓</Arrow>
          </LegendItem>
          <LegendItem $w={200} $color={C.gold}><Squeeze $k={0.775} $w={178}>MA1:150.5万</Squeeze><Arrow $w={20} $size={39}>↑</Arrow></LegendItem>
          <LegendItem $w={200} $color={C.violet}><Squeeze $k={0.775} $w={178}>MA2:103.1万</Squeeze><Arrow $w={20} $size={39}>↑</Arrow></LegendItem>
          <LegendItem $w={202} $color={C.green}><Squeeze $k={0.775} $w={178}>MA3:16.88万</Squeeze><Arrow $w={20} $size={39}>↑</Arrow></LegendItem>
        </Legend>
        <VolumeChart />
        <Legend $gap={20}>
          <LegendItem $w={329} $color={C.ink}>
            <Chip $w={150} $size={37}>MACD<Caret $w={16} $h={12} $c="#555" /></Chip>
            <Txt $size={40} $ls={0.4}>DIF:1.90</Txt>
            <Arrow $w={20} $size={39}>↑</Arrow>
          </LegendItem>
          <LegendItem $w={197} $color={C.gold}><Txt $size={40} $ls={0.9}>DEA:1.21</Txt><Arrow $w={20} $size={39}>↑</Arrow></LegendItem>
          <LegendItem $w={150} $color={C.violet}><Txt $size={40} $ls={0.5}>M:1.38</Txt><Arrow $w={20} $size={39}>↓</Arrow></LegendItem>
        </Legend>
        <MacdChart />
        <Crosshair />
        <SideTab><Chevron left w={16} h={29} c="#fff" sw={4.5} /></SideTab>
      </ChartStack>

      <PanelShade />
      <DayHead>
        <DayTop>
          <Txt $size={48} $ls={-1.5}>2025/11/17</Txt>
          <Replay>
            <HistoryIcon />
            <ReplayText>超级复盘</ReplayText>
            <Chevron />
          </Replay>
        </DayTop>
        <DayStats>
          <DayStat $c={C.red}>价格:<b>14.37</b></DayStat>
          <DayStat $c={C.red}>涨幅:<b>5.12%</b></DayStat>
          <DayStat $c={C.green}>均价:<b>13.60</b></DayStat>
          <DayStat $c={C.ink}>金额:<b>20.16亿</b></DayStat>
        </DayStats>
      </DayHead>

      <IntradayChart />
      <AmountRow>
        <Chip $w={131}><ChipSqueeze>成交额</ChipSqueeze><Caret $w={15} $h={12} $c="#555" /></Chip>
        <Txt $size={37} $ls={-0.8}>20.16亿</Txt>
      </AmountRow>
      <TurnoverChart />
      <TimeAxis>
        <span>09:15</span>
        <span>09:30</span>
        <span>15:00</span>
      </TimeAxis>

      <BottomBar>
        <BottomItem><Chevron left />前一天</BottomItem>
        <BottomItem>后一天<Chevron /></BottomItem>
        <BottomItem $muted>关闭</BottomItem>
      </BottomBar>
      <NavBar>
        <svg width="46" height="50" viewBox="0 0 46 50" fill="none" stroke="#888" strokeWidth="4" strokeLinejoin="round"><path d="M39 3V47L3 25Z" /></svg>
        <svg width="48" height="48" viewBox="0 0 48 48" fill="none" stroke="#888" strokeWidth="4"><circle cx="24" cy="24" r="21.500" /></svg>
        <svg width="46" height="46" viewBox="0 0 46 46" fill="none" stroke="#888" strokeWidth="4"><rect x="4" y="3" width="38" height="39" rx="2" /></svg>
      </NavBar>
    </Screen>
  );
}
